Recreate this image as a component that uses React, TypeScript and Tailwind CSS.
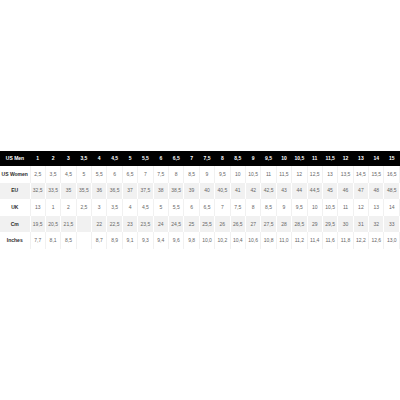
const header = ["1", "2", "3", "3,5", "4", "4,5", "5", "5,5", "6", "6,5", "7", "7,5", "8", "8,5", "9", "9,5", "10", "10,5", "11", "11,5", "12", "13", "14", "15"];

const rows: Array<{ label: string; values: string[] }> = [
  { label: "US Women", values: ["2,5", "3,5", "4,5", "5", "5,5", "6", "6,5", "7", "7,5", "8", "8,5", "9", "9,5", "10", "10,5", "11", "11,5", "12", "12,5", "13", "13,5", "14,5", "15,5", "16,5"] },
  { label: "EU", values: ["32,5", "33,5", "35", "35,5", "36", "36,5", "37", "37,5", "38", "38,5", "39", "40", "40,5", "41", "42", "42,5", "43", "44", "44,5", "45", "46", "47", "48", "48,5"] },
  { label: "UK", values: ["13", "1", "2", "2,5", "3", "3,5", "4", "4,5", "5", "5,5", "6", "6,5", "7", "7,5", "8", "8,5", "9", "9,5", "10", "10,5", "11", "12", "13", "14"] },
  { label: "Cm", values: ["19,5", "20,5", "21,5", "", "22", "22,5", "23", "23,5", "24", "24,5", "25", "25,5", "26", "26,5", "27", "27,5", "28", "28,5", "29", "29,5", "30", "31", "32", "33"] },
  { label: "Inches", values: ["7,7", "8,1", "8,5", "", "8,7", "8,9", "9,1", "9,3", "9,4", "9,6", "9,8", "10,0", "10,2", "10,4", "10,6", "10,8", "11,0", "11,2", "11,4", "11,6", "11,8", "12,2", "12,6", "13,0"] },
];

export default function App() {
  return (
    <div className="flex h-[400px] w-[400px] items-center bg-white font-['Liberation_Sans',Arial,sans-serif]">
      <table className="w-full table-fixed border-collapse text-center text-[5px] leading-none">
        <colgroup>
          <col className="w-[30px]" />
          {header.map((h) => <col key={h} />)}
        </colgroup>
        <thead>
          <tr className="h-[15px] bg-black font-bold text-white">
            <th className="px-0">US Men</th>
            {header.map((h) => <th key={h} className="px-0">{h}</th>)}
          </tr>
        </thead>
        <tbody>
          {rows.map((row, i) => {
            const shaded = i % 2 === 1;
            return (
              <tr key={row.label} className={`h-[16.6px] ${shaded ? "bg-[#f1f1f1]" : "bg-white"}`}>
                <td className={`border-r font-bold text-[#2b2b2b] ${shaded ? "border-white" : "border-[#f1f1f1]"}`}>{row.label}</td>
                {row.values.map((v, j) => (
                  <td key={j} className={`border-r text-[#666] ${shaded ? "border-white" : "border-[#f1f1f1]"}`}>{v}</td>
                ))}
              </tr>
            );
          })}
        </tbody>
      </table>
    </div>
  );
}
